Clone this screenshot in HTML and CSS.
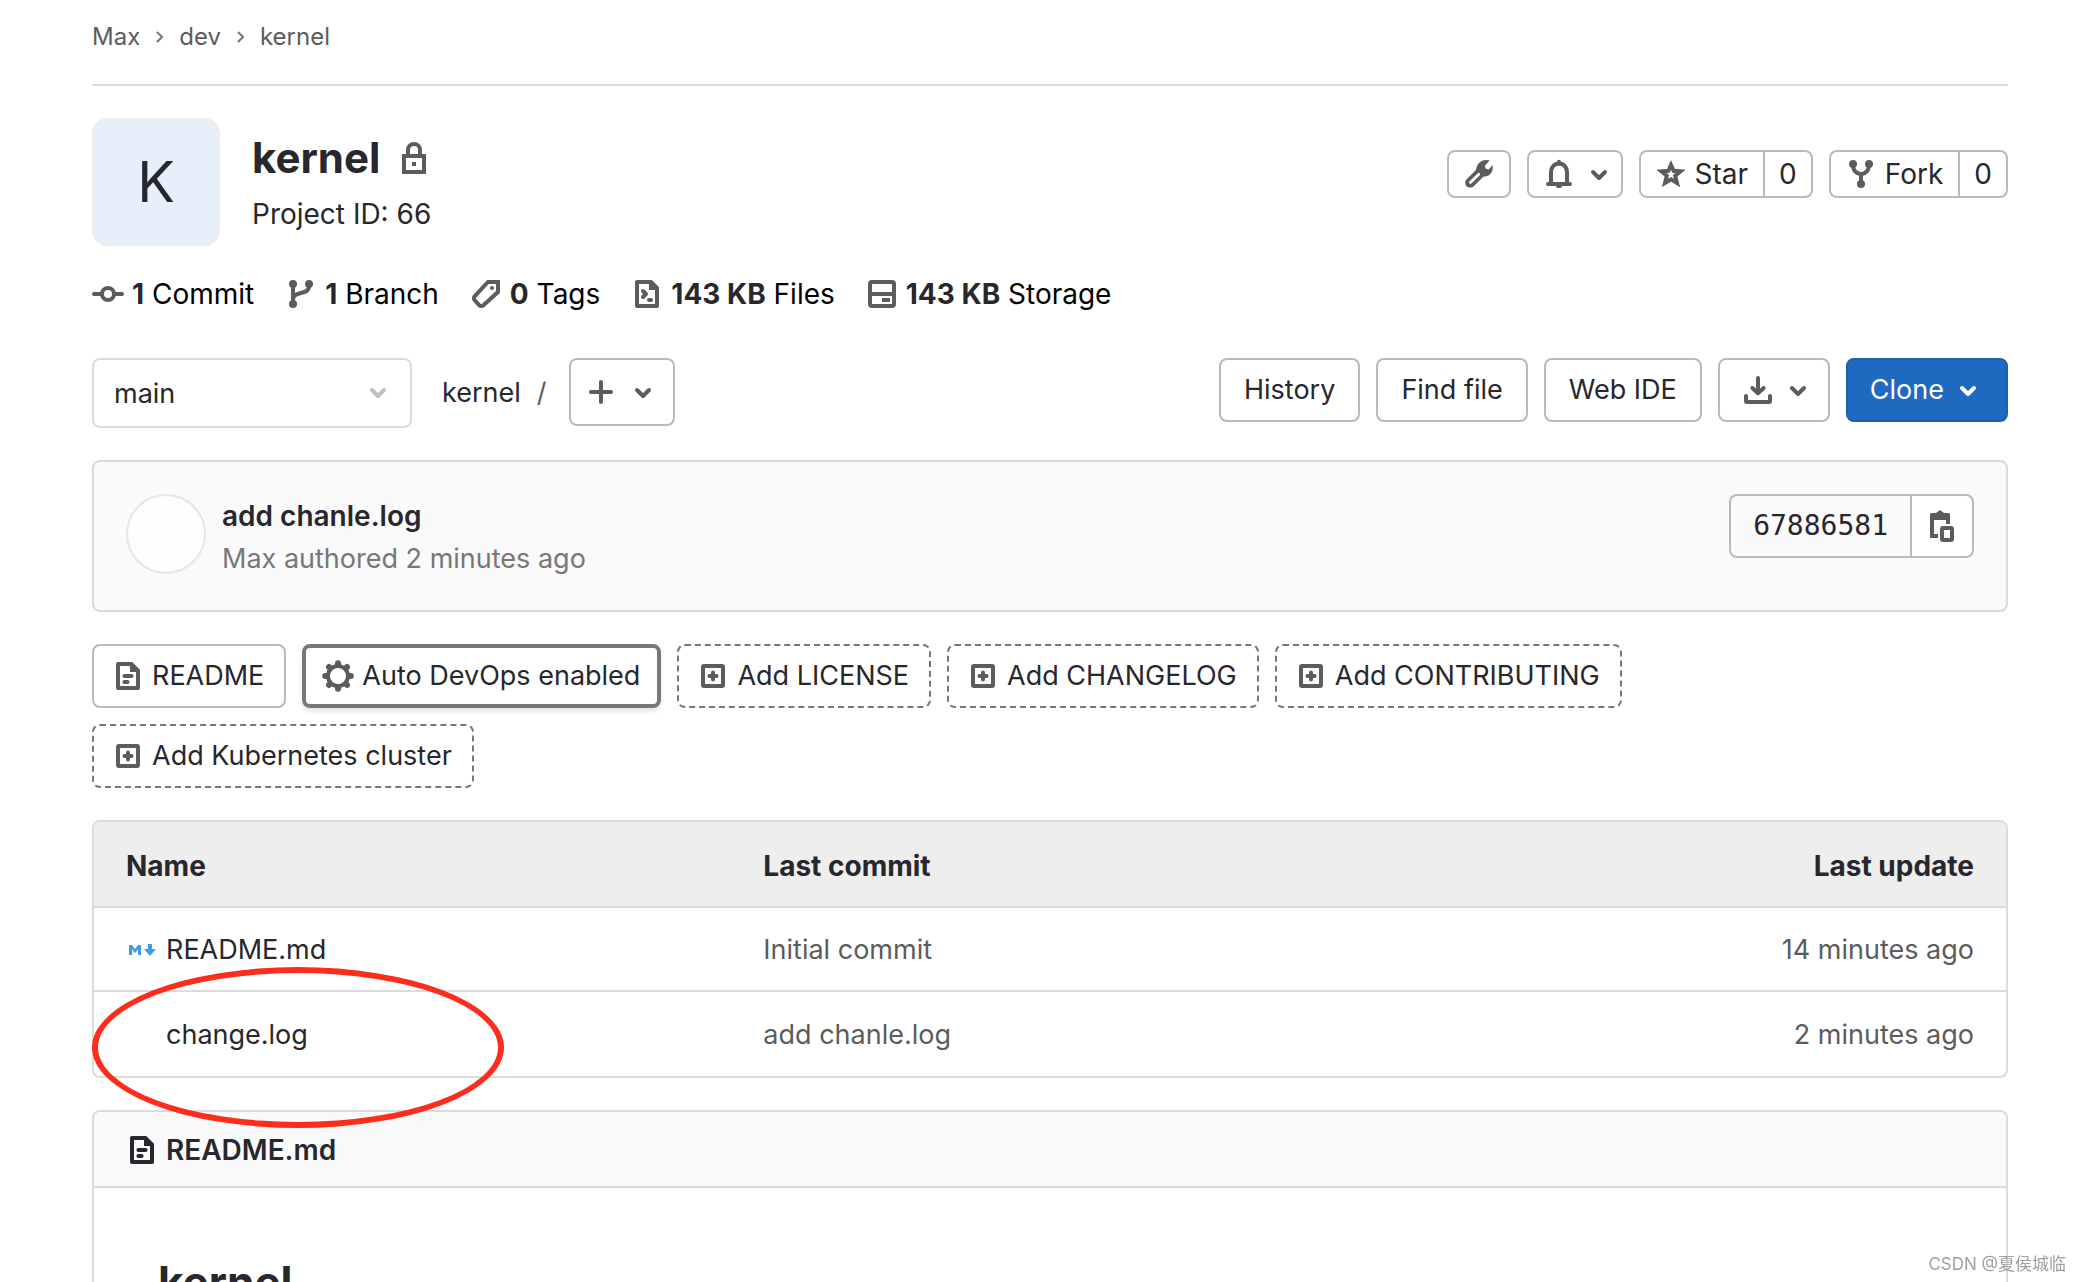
FILE: index.html
```html
<!DOCTYPE html>
<html lang="en">
<head>
<meta charset="utf-8">
<title>kernel</title>
<link rel="stylesheet" href="styles.css">
</head>
<body>
<svg class="sprite" aria-hidden="true">
  <symbol id="chevron-down" viewBox="0 0 16 16"><path class="line" d="M5 7l3 3 3-3"/></symbol>
  <symbol id="crumb" viewBox="0 0 8 12"><path d="M2 1l5 5-5 5" fill="none" stroke="currentColor" stroke-width="2"/></symbol>
  <symbol id="lock" viewBox="0 0 16 16"><path fill="none" stroke="currentColor" stroke-width="2" d="M3 7h10v8H3zM5 7V4a3 3 0 0 1 6 0v3"/><path fill="currentColor" d="M7 10h2v2H7z"/></symbol>
  <symbol id="commit" viewBox="0 0 16 16"><circle class="line" cx="8" cy="8" r="3"/><path class="line" d="M1 8h4M11 8h4"/></symbol>
  <symbol id="branch" viewBox="0 0 16 16"><g fill="currentColor"><circle cx="4" cy="3" r="2"/><circle cx="12" cy="3" r="2"/><circle cx="4" cy="13" r="2"/></g><path class="line" d="M4 3v10M12 3v1c0 5-8 2-8 7"/></symbol>
  <symbol id="tag" viewBox="0 0 16 16"><path fill="none" stroke="currentColor" stroke-width="2" d="M9 2h5v5l-7.300 6.600a1.500 1.500 0 0 1-2.100 0L2.400 11.200a1.500 1.500 0 0 1 0-2.100z"/><circle cx="11" cy="5" r="1" fill="currentColor"/></symbol>
  <symbol id="doc-code" viewBox="0 0 16 16"><path class="line" d="M3 2h7l3 3v9H3z"/><path d="M9 1h1l4 4v1H9z" fill="currentColor"/><path class="line" d="M6 6.500L7.500 8 6 9.500"/><path class="line" d="M9 11h1"/></symbol>
  <symbol id="disk" viewBox="0 0 16 16"><rect class="line" x="2" y="2" width="12" height="12" rx="1"/><path d="M2 7h12v2H2zM8 10h4v2H8z" fill="currentColor"/></symbol>
  <symbol id="wrench" viewBox="0 0 16 16"><path d="M3.600 12.400L9 7" fill="none" stroke="currentColor" stroke-width="5" stroke-linecap="round"/><path fill="currentColor" d="M11.600 1c.7 0 1.300.1 1.700.3L10.900 4l.4 1.300 1.500.4L14.800 3.600c.6 2.300-1 5.700-4 5.700L9 9.500 6.500 7C6.300 4 8.200 1 11.600 1z"/><path d="M3.700 12.300l4.200-4.200" fill="none" stroke="#fff" stroke-width="1.400" stroke-linecap="round"/></symbol>
  <symbol id="bell" viewBox="0 0 16 16"><path class="line" d="M4 12.700V7a4 4.300 0 0 1 8 0v5.700M2.500 13h11M8 1.900v1M7.500 14h1"/></symbol>
  <symbol id="star" viewBox="0 0 16 16"><path fill="none" stroke="currentColor" stroke-width="2" d="M8 3.500l1.300 2.900 3.500.3-2.700 2.200.9 3.600L8 10.700l-3 1.800.9-3.600-2.700-2.200 3.500-.3z"/></symbol>
  <symbol id="fork" viewBox="0 0 16 16"><g fill="currentColor"><circle cx="4" cy="3" r="2"/><circle cx="12" cy="3" r="2"/><circle cx="8" cy="13" r="2"/></g><path class="line" d="M4 3c0 3.500 1.500 4.500 4 5.200 2.500-.7 4-1.700 4-5.200M8 8v5"/></symbol>
  <symbol id="plus" viewBox="0 0 16 16"><path class="line" d="M8 3v10M3 8h10"/></symbol>
  <symbol id="download" viewBox="0 0 16 16"><path class="line" d="M8 2v7M5.200 7L8 9.700 10.800 7M2 11v2.500a.5.5 0 0 0 .5.500h11a.5.500 0 0 0 .5-.500V11"/></symbol>
  <symbol id="paste" viewBox="0 0 16 16"><path fill="none" stroke="currentColor" stroke-width="2" d="M6 13H3V3h8v4"/><path fill="currentColor" fill-rule="evenodd" d="M2 2.500a1 1 0 0 1 1-1h2L7 0l2 1.500h2a1 1 0 0 1 1 1V5H4V4H2zM7 2a1 1 0 1 0 0 2 1 1 0 0 0 0-2z"/><rect x="8" y="9" width="5" height="6" rx=".5" fill="none" stroke="currentColor" stroke-width="2"/></symbol>
  <symbol id="doc" viewBox="0 0 16 16"><path class="line" d="M3 2h6.500L13 5.500V14H3z"/><path d="M9 1h1l4 4v1H9z" fill="currentColor"/><path class="line" d="M6.200 8h3.600M6.200 11h1.600"/></symbol>
  <symbol id="plus-square" viewBox="0 0 16 16"><rect class="line" x="3" y="3" width="10" height="10" rx=".5"/><path class="line" d="M8 6.200v3.600M6.200 8h3.600"/></symbol>
  <symbol id="gear" viewBox="0 0 16 16"><circle cx="8" cy="8" r="5" fill="none" stroke="currentColor" stroke-width="2"/><path stroke="currentColor" stroke-width="3" stroke-linecap="round" fill="none" d="M8 1.600v.6M8 13.800v.6M1.600 8h.6M13.800 8h.6M3.500 3.500l.4.4M12.100 12.100l.4.4M12.500 3.500l-.4.4M3.900 12.100l-.4.400"/></symbol>
  <symbol id="markdown" viewBox="0 0 28 12"><path fill="currentColor" d="M1 11V1h3l3 4 3-4h3v10h-3V5.500L7 9 4 5.500V11zM20 0h4v5h4l-6 7-6-7h4z"/></symbol>
</svg>

<div class="page">
  <nav class="crumbs" aria-label="Breadcrumb">
    <a href="#">Max</a><svg><use href="#crumb"/></svg><a href="#">dev</a><svg><use href="#crumb"/></svg><a href="#">kernel</a>
  </nav>

  <header class="project">
    <div class="project-avatar">K</div>
    <div class="project-name">
      <h1>kernel <svg class="icon"><use href="#lock"/></svg></h1>
      <p>Project ID: 66</p>
    </div>
    <div class="project-actions">
      <button class="btn small" aria-label="Settings"><svg class="icon"><use href="#wrench"/></svg></button>
      <button class="btn small menu" aria-label="Notifications"><svg class="icon"><use href="#bell"/></svg><svg class="icon"><use href="#chevron-down"/></svg></button>
      <div class="group"><button class="btn small"><svg class="icon"><use href="#star"/></svg>Star</button><a class="btn small" href="#">0</a></div>
      <div class="group"><button class="btn small"><svg class="icon"><use href="#fork"/></svg>Fork</button><a class="btn small" href="#">0</a></div>
    </div>
  </header>

  <div class="stats">
    <a href="#"><svg class="icon"><use href="#commit"/></svg><span><b>1</b> Commit</span></a>
    <a href="#"><svg class="icon"><use href="#branch"/></svg><span><b>1</b> Branch</span></a>
    <a href="#"><svg class="icon"><use href="#tag"/></svg><span><b>0</b> Tags</span></a>
    <a href="#"><svg class="icon"><use href="#doc-code"/></svg><span><b>143 KB</b> Files</span></a>
    <a href="#"><svg class="icon"><use href="#disk"/></svg><span><b>143 KB</b> Storage</span></a>
  </div>

  <div class="toolbar">
    <div class="ref">
      <select aria-label="Branch"><option>main</option></select>
      <svg class="icon"><use href="#chevron-down"/></svg>
    </div>
    <div class="path"><a href="#">kernel</a><span>/</span></div>
    <button class="btn add" aria-label="Add"><svg class="icon"><use href="#plus"/></svg><svg class="icon"><use href="#chevron-down"/></svg></button>
    <div class="tools">
      <a class="btn" href="#">History</a>
      <a class="btn" href="#">Find file</a>
      <a class="btn" href="#">Web IDE</a>
      <button class="btn menu" aria-label="Download"><svg class="icon"><use href="#download"/></svg><svg class="icon"><use href="#chevron-down"/></svg></button>
      <button class="btn primary">Clone<svg class="icon"><use href="#chevron-down"/></svg></button>
    </div>
  </div>

  <section class="commit">
    <div class="commit-avatar"></div>
    <div class="commit-text">
      <a href="#">add chanle.log</a>
      <p>Max authored 2 minutes ago</p>
    </div>
    <div class="group hash"><span class="btn sha">67886581</span><button class="btn copy" aria-label="Copy commit SHA"><svg class="icon"><use href="#paste"/></svg></button></div>
  </section>

  <div class="suggestions">
    <a class="btn" href="#"><svg class="icon"><use href="#doc"/></svg>README</a>
    <a class="btn focused" href="#"><svg class="icon"><use href="#gear"/></svg>Auto DevOps enabled</a>
    <a class="btn dashed" href="#"><svg class="icon"><use href="#plus-square"/></svg>Add LICENSE</a>
    <a class="btn dashed" href="#"><svg class="icon"><use href="#plus-square"/></svg>Add CHANGELOG</a>
    <a class="btn dashed" href="#"><svg class="icon"><use href="#plus-square"/></svg>Add CONTRIBUTING</a>
    <a class="btn dashed" href="#"><svg class="icon"><use href="#plus-square"/></svg>Add Kubernetes cluster</a>
  </div>

  <div class="files">
    <table>
      <thead><tr><th>Name</th><th>Last commit</th><th>Last update</th></tr></thead>
      <tbody>
        <tr><td><a class="file" href="#"><svg class="md"><use href="#markdown"/></svg>README.md</a></td><td>Initial commit</td><td>14 minutes ago</td></tr>
        <tr><td><a class="file plain" href="#">change.log</a></td><td>add chanle.log</td><td>2 minutes ago</td></tr>
      </tbody>
    </table>
    <div class="highlight"></div>
  </div>

  <article class="readme">
    <div class="readme-head"><svg class="icon"><use href="#doc"/></svg>README.md</div>
    <div class="readme-body"><h2>kernel</h2></div>
  </article>
</div>
<div class="watermark">CSDN @夏侯城临</div>
</body>
</html>
```
FILE: styles.css
```css
* { box-sizing: border-box; }

body {
  margin: 0;
  height: 100vh;
  overflow: hidden;
  background: #fff;
  color: #28272d;
  font-family: Inter, "Noto Sans CJK SC", sans-serif;
  font-size: 27px;
  line-height: 40px;
}

h1, h2, p { margin: 0; }
a { color: inherit; text-decoration: none; }

.sprite { display: none; }
.line {
  fill: none;
  stroke: currentColor;
  stroke-width: 2;
  stroke-linecap: round;
  stroke-linejoin: round;
}
.icon { width: 32px; height: 32px; flex: none; color: #5c5c5c; }

.page {
  height: 100%;
  padding: 0 72px 0 92px;
  display: flex;
  flex-direction: column;
}
.page > * { flex: none; }

.crumbs {
  display: flex;
  align-items: center;
  padding: 21px 0 31px;
  border-bottom: 2px solid #dbdbdb;
  color: #5c5c5c;
  font-size: 24px;
  line-height: 32px;
}
.crumbs svg { width: 8px; height: 12px; margin: 0 16px 0 15px; color: #777; }

.project { display: flex; margin-top: 32px; font-size: 28px; }
.project-avatar {
  width: 128px;
  height: 128px;
  border: 2px solid #ececec;
  border-radius: 16px;
  background: #e6f0fb;
  font-size: 56px;
  line-height: 124px;
  text-align: center;
}
.project-name { margin-left: 32px; padding-top: 16px; }
.project-name h1 { display: flex; align-items: center; gap: 18px; font-size: 42px; line-height: 48px; }
.project-name p { margin-top: 12px; }
.project-actions { display: flex; gap: 16px; margin-left: auto; padding-top: 32px; }

.btn {
  display: inline-flex;
  align-items: center;
  justify-content: center;
  gap: 8px;
  height: 64px;
  padding: 0 22px;
  border: 2px solid #bababa;
  border-radius: 8px;
  background: #fff;
  color: #28272d;
  font: inherit;
  white-space: nowrap;
}
.btn.small { height: 48px; padding: 0 14px; }
.btn.menu { padding-right: 14px; }
.btn.small.menu { padding-right: 6px; }
.btn.primary { background: #1f69c0; border-color: #1b5eb2; color: #fff; }
.btn.primary .icon { color: #fff; }

.group { display: flex; }
.group > :first-child { border-radius: 8px 0 0 8px; border-right: 0; }
.group > :last-child { border-radius: 0 8px 8px 0; }
.group > .small:first-child { padding-right: 15px; }

.stats { display: flex; gap: 31px; margin-top: 32px; color: #000; font-size: 28px; line-height: 32px; }
.stats a { display: flex; gap: 8px; }
.stats b { color: #28272d; }

.toolbar { display: flex; align-items: flex-start; margin-top: 48px; }
.ref { position: relative; width: 320px; }
.ref select {
  width: 100%;
  height: 70px;
  padding: 2px 20px 0;
  appearance: none;
  border: 2px solid #dbdbdb;
  border-radius: 8px;
  background: #fff;
  color: inherit;
  font: inherit;
}
.ref .icon { position: absolute; right: 18px; top: 18px; color: #bfbfbf; pointer-events: none; }
.path { display: flex; gap: 16px; margin: 0 22px 0 30px; padding-top: 15px; }
.path span { color: #5c5c5c; }
.btn.add { height: 68px; padding: 0 14px; gap: 10px; }
.tools { display: flex; gap: 16px; margin-left: auto; }
.tools a { padding: 0 23px; }

.commit {
  display: flex;
  align-items: flex-start;
  height: 152px;
  margin-top: 32px;
  padding: 32px;
  border: 2px solid #dbdbdb;
  border-radius: 8px;
  background: #fafafa;
}
.commit-avatar { width: 80px; height: 80px; border: 2px solid #e6e6e6; border-radius: 50%; background: #fefefe; }
.commit-text { margin-left: 16px; padding-top: 1px; color: #777; line-height: 42px; }
.commit-text a { color: #28272d; font-size: 28px; font-weight: 600; }
.hash { margin-left: auto; }
.btn.sha { background: #fafafa; font-family: "DejaVu Sans Mono", monospace; font-size: 28px; }
.btn.copy { padding: 0 14px; }

.suggestions { display: flex; flex-wrap: wrap; gap: 16px; margin-top: 32px; }
.suggestions .btn { padding: 0 20px 0 18px; }
.suggestions .focused { padding: 0 17px 0 16px; border: 4px solid #777; box-shadow: 0 4px 4px #00000018; }
.suggestions .dashed { border: 2px dashed #777; }

.files { position: relative; margin-top: 32px; border: 2px solid #dbdbdb; border-radius: 8px; }
.files table { width: 100%; border-spacing: 0; table-layout: fixed; }
.files th, .files td { height: 84px; padding: 2px 32px 0; text-align: left; color: #5c5c5c; }
.files th { height: 86px; padding-top: 4px; background: #eee; color: #28272d; font-size: 28px; font-weight: 700; border-bottom: 2px solid #dbdbdb; }
.files tr:first-child td { border-bottom: 2px solid #dbdbdb; }
.files th:last-child, .files td:last-child { text-align: right; }
.files th:first-child { border-top-left-radius: 6px; }
.files th:last-child { border-top-right-radius: 6px; }
.file { display: flex; align-items: center; gap: 10px; color: #28272d; }
.file.plain { padding-left: 40px; }
.md { width: 28px; height: 12px; margin-left: 2px; color: #409bed; }
.highlight {
  position: absolute;
  left: -2px;
  bottom: -52px;
  width: 412px;
  height: 161px;
  border: 6px solid #fc2d1c;
  border-radius: 50%;
  pointer-events: none;
}

.page > .readme { flex: 1 0 0; min-height: 0; margin-top: 32px; border: 2px solid #dbdbdb; border-bottom: 0; border-radius: 8px 8px 0 0; overflow: hidden; }
.readme-head {
  display: flex;
  align-items: center;
  gap: 8px;
  height: 76px;
  padding: 2px 32px 0;
  border-bottom: 2px solid #dbdbdb;
  background: #fafafa;
  font-size: 28px;
  font-weight: 600;
}
.readme-head .icon { color: #28272d; }
.readme-body { padding: 66px 64px; }
.readme-body h2 { font-size: 44px; line-height: 56px; }

.watermark {
  position: fixed;
  right: 14px;
  bottom: 6px;
  color: #a0a0a0;
  font-size: 17px;
  line-height: 24px;
}
```
